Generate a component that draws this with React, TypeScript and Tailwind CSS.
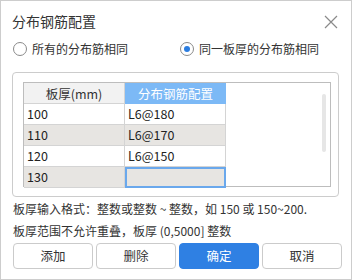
import React from "react";

const font = { fontFamily: '"Microsoft YaHei","Noto Sans CJK SC","Noto Sans",sans-serif' };

function Radio({ checked, label }: { checked?: boolean; label: string }) {
  return (
    <div className="flex items-center gap-[5px]">
      <span className="w-[14px] h-[14px] rounded-full border border-[#8a8a8a] bg-white flex items-center justify-center">
        {checked && <span className="w-[6px] h-[6px] rounded-full bg-[#2b7de0]" />}
      </span>
      <span className="text-[12px] leading-[16px] text-[#333]">{label}</span>
    </div>
  );
}

const rows = [
  { t: "100", v: "L6@180", alt: false },
  { t: "110", v: "L6@170", alt: true },
  { t: "120", v: "L6@150", alt: false },
  { t: "130", v: "", alt: true, sel: true },
];

export default function App() {
  return (
    <div
      className="w-[352px] h-[280px] bg-white border border-[#cdcdcd] flex flex-col overflow-hidden"
      style={font}
    >
      <div className="h-[40px] flex items-center justify-between pl-[11px] pr-[13px] shrink-0">
        <span className="text-[14px] text-[#333] leading-[20px]">分布钢筋配置</span>
        <svg width="14" height="14" viewBox="0 0 14 14" className="mt-[1px]">
          <path d="M1 1L13 13M13 1L1 13" stroke="#8a8a8a" strokeWidth="1.2" />
        </svg>
      </div>
      <div className="h-[16px] flex items-center pl-[12px] shrink-0">
        <div className="w-[167px]">
          <Radio label="所有的分布筋相同" />
        </div>
        <Radio checked label="同一板厚的分布筋相同" />
      </div>
      <div className="ml-[11px] mt-[15px] w-[327px] h-[125px] border border-[#cccccc] rounded-[4px] shrink-0 pl-[10px] pt-[9px]">
        <div className="relative w-[308px] h-[105px] border border-[#bdbdbd] bg-white">
          <div className="flex h-[21px] text-[12.5px] leading-[21px]">
            <div className="w-[101px] bg-[#f2f2f2] border-r border-b border-[#d4d4d4] text-center text-[#333]">板厚(mm)</div>
            <div className="w-[101px] bg-[#7cb9f6] border-b border-[#7cb9f6] text-center text-white">分布钢筋配置</div>
          </div>
          {rows.map((r) => (
            <div key={r.t} className="flex h-[21px] text-[12.5px] leading-[20px] text-[#222]">
              <div
                className={`w-[101px] border-r border-b border-[#d4d4d4] pl-[3px] ${r.alt ? "bg-[#e7e5e2]" : "bg-white"}`}
              >
                {r.t}
              </div>
              <div
                className={`w-[101px] pl-[3px] ${r.alt ? "bg-[#e7e5e2]" : "bg-white"} ${r.sel ? "border-2 border-[#6aa8ec]" : "border-r border-b border-[#d4d4d4]"}`}
              >
                {r.v}
              </div>
            </div>
          ))}
          <div className="absolute left-[298px] top-[11px] w-[4px] h-[58px] rounded-full bg-[#e6e6e6]" />
        </div>
      </div>
      <div className="pl-[12px] pt-[1px] text-[12px] leading-[22px] text-[#333] shrink-0">
        <div>板厚输入格式：整数或整数 ~ 整数，如 150 或 150~200.</div>
        <div>板厚范围不允许重叠，板厚 (0,5000] 整数</div>
      </div>
      <div className="flex gap-[3px] pl-[12px] pr-[9px] mt-[1px] shrink-0">
        <button className="flex-1 h-[26px] rounded-[4px] border border-[#cbcbcb] bg-white text-[12.5px] text-[#333]">添加</button>
        <button className="flex-1 h-[26px] rounded-[4px] border border-[#cbcbcb] bg-white text-[12.5px] text-[#333]">删除</button>
        <button className="flex-1 h-[26px] rounded-[4px] border border-[#2f80e3] bg-[#2f80e3] text-[12.5px] text-white">确定</button>
        <button className="flex-1 h-[26px] rounded-[4px] border border-[#cbcbcb] bg-white text-[12.5px] text-[#333]">取消</button>
      </div>
    </div>
  );
}
